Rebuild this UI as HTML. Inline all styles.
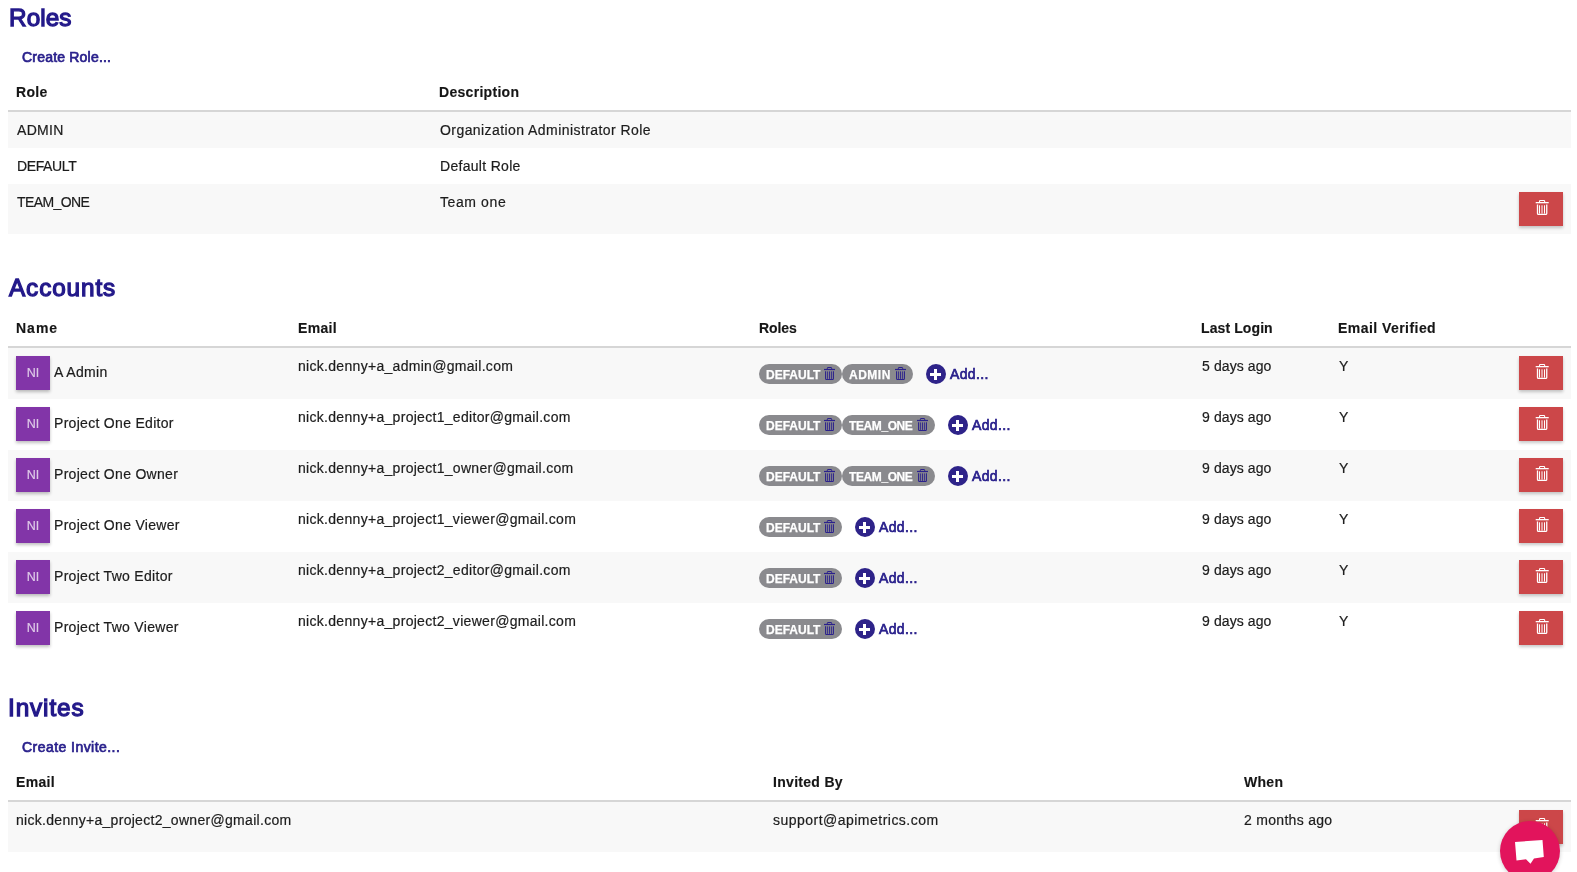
<!DOCTYPE html>
<html><head><meta charset="utf-8">
<style>
html,body{margin:0;padding:0;background:#fff;width:1577px;height:872px;overflow:hidden;position:relative;}
body{font-family:"Liberation Sans",sans-serif;color:#222;}
.h,.lk,.th,.td,.add,.chip,.av{will-change:transform;}
.h{position:absolute;font-size:24.3px;font-weight:normal;-webkit-text-stroke:1.3px #23198a;color:#23198a;line-height:30px;white-space:nowrap;}
.lk{position:absolute;font-size:14px;font-weight:normal;-webkit-text-stroke:0.7px #2a218c;color:#2a218c;line-height:20px;white-space:nowrap;letter-spacing:0.1px;}
.th{position:absolute;font-size:14px;font-weight:bold;color:#161616;-webkit-text-stroke:0.15px #161616;line-height:20px;white-space:nowrap;letter-spacing:0.3px;}
.td{position:absolute;font-size:14px;color:#1c1c1c;-webkit-text-stroke:0.2px #1c1c1c;line-height:20px;white-space:nowrap;letter-spacing:0.3px;}
.hl{position:absolute;left:8px;width:1563px;height:2px;background:#d6d6d6;}
.row{position:absolute;left:8px;width:1563px;}
.g{background:#f8f8f8;}
.del{position:absolute;left:1519px;width:44px;height:34px;background:#cc4749;box-shadow:0 2px 3px rgba(0,0,0,0.22);}
.del svg{position:absolute;left:16px;top:8px;}
.av{position:absolute;left:16px;width:34px;height:34px;background:#8235a8;box-shadow:0 2px 3px rgba(0,0,0,0.25);color:rgba(255,255,255,0.72);-webkit-text-stroke:0.2px rgba(255,255,255,0.5);font-size:12.5px;line-height:34px;text-align:center;}
.chip{position:absolute;height:20px;border-radius:10px;background:#8a8a8e;color:#fff;-webkit-text-stroke:0.25px #fff;font-size:12px;font-weight:bold;line-height:20px;}
.chip span{position:absolute;left:7px;top:1px;}
.chip svg{position:absolute;top:3px;}
.plus{position:absolute;width:20px;height:20px;border-radius:10px;background:#2e2389;}
.plus:before{content:"";position:absolute;left:4px;top:9px;width:11px;height:3px;background:#fff;}
.plus:after{content:"";position:absolute;left:8px;top:5px;width:3px;height:11px;background:#fff;}
.add{position:absolute;font-size:14px;font-weight:normal;-webkit-text-stroke:0.7px #2a218c;color:#2a218c;line-height:20px;white-space:nowrap;letter-spacing:0.35px;}
.chat{position:absolute;left:1500px;top:821px;width:60px;height:60px;border-radius:30px;background:#e2145c;box-shadow:0 1px 4px rgba(0,0,0,0.2);}
</style></head><body>
<div class="h" style="left:9px;top:3px;letter-spacing:0.1px">Roles</div>
<div class="lk" style="left:22px;top:47px;letter-spacing:0.2px">Create Role...</div>
<div class="th" style="left:16px;top:82px;letter-spacing:0.3px">Role</div>
<div class="th" style="left:439px;top:82px;letter-spacing:0.3px">Description</div>
<div class="hl" style="top:110px"></div>
<div class="row g" style="top:112px;height:36px"></div>
<div class="row" style="top:148px;height:36px"></div>
<div class="row g" style="top:184px;height:50px"></div>
<div class="td" style="left:17px;top:120px;letter-spacing:0.3px">ADMIN</div>
<div class="td" style="left:440px;top:120px;letter-spacing:0.43px">Organization Administrator Role</div>
<div class="td" style="left:17px;top:156px;letter-spacing:-0.37px">DEFAULT</div>
<div class="td" style="left:440px;top:156px">Default Role</div>
<div class="td" style="left:17px;top:192px;letter-spacing:-0.6px">TEAM_ONE</div>
<div class="td" style="left:440px;top:192px;letter-spacing:0.6px">Team one</div>
<div class="del" style="top:192px"><svg width="15" height="16" viewBox="0 0 15 16">
<rect x="0.7" y="2.0" width="13" height="1.3" fill="#fff"/>
<path d="M4.55 2.1V1.3Q4.55 0.55 5.3 0.55H8.9Q9.65 0.55 9.65 1.3V2.1" fill="none" stroke="#fff" stroke-width="1.1"/>
<path d="M2.5 4.6V13.4Q2.5 14.35 3.45 14.35H10.8Q11.75 14.35 11.75 13.4V4.6" fill="none" stroke="#fff" stroke-width="1.3"/>
<path d="M4.5 5.3V13.6M7.0 5.3V13.6M9.5 5.3V13.6" stroke="#fff" stroke-width="1"/>
</svg></div>
<div class="h" style="left:9px;top:273px;letter-spacing:0.9px">Accounts</div>
<div class="th" style="left:16px;top:318px;letter-spacing:1.0px">Name</div>
<div class="th" style="left:298px;top:318px;letter-spacing:0.3px">Email</div>
<div class="th" style="left:759px;top:318px;letter-spacing:-0.1px">Roles</div>
<div class="th" style="left:1201px;top:318px;letter-spacing:0.1px">Last Login</div>
<div class="th" style="left:1338px;top:318px;letter-spacing:0.45px">Email Verified</div>
<div class="hl" style="top:346px"></div>
<div class="row g" style="top:348px;height:51px"></div>
<div class="av" style="top:356px">NI</div>
<div class="td" style="left:54px;top:362px">A Admin</div>
<div class="td" style="left:298px;top:356px">nick.denny+a_admin@gmail.com</div>
<div class="td" style="left:1202px;top:356px;letter-spacing:0.1px">5 days ago</div>
<div class="td" style="left:1339px;top:356px">Y</div>
<div class="chip" style="left:759px;top:364px;width:83px"><span>DEFAULT</span><svg style="left:65px" width="11" height="13" viewBox="0 0 11 13">
<rect x="0" y="1.9" width="11" height="1.2" fill="#2b218c"/>
<path d="M3.3 2V1.1Q3.3 0.5 3.9 0.5H7.1Q7.7 0.5 7.7 1.1V2" fill="none" stroke="#2b218c" stroke-width="1"/>
<path d="M1.6 4.2V11.6Q1.6 12.5 2.5 12.5H8.5Q9.4 12.5 9.4 11.6V4.2" fill="none" stroke="#2b218c" stroke-width="1.1"/>
<path d="M3.6 4.4V11.9M5.5 4.4V11.9M7.4 4.4V11.9" stroke="#2b218c" stroke-width="0.9"/>
</svg></div>
<div class="chip" style="left:842px;top:364px;width:71px"><span style="letter-spacing:0.5px">ADMIN</span><svg style="left:53px" width="11" height="13" viewBox="0 0 11 13">
<rect x="0" y="1.9" width="11" height="1.2" fill="#2b218c"/>
<path d="M3.3 2V1.1Q3.3 0.5 3.9 0.5H7.1Q7.7 0.5 7.7 1.1V2" fill="none" stroke="#2b218c" stroke-width="1"/>
<path d="M1.6 4.2V11.6Q1.6 12.5 2.5 12.5H8.5Q9.4 12.5 9.4 11.6V4.2" fill="none" stroke="#2b218c" stroke-width="1.1"/>
<path d="M3.6 4.4V11.9M5.5 4.4V11.9M7.4 4.4V11.9" stroke="#2b218c" stroke-width="0.9"/>
</svg></div>
<div class="plus" style="left:926px;top:364px"></div>
<div class="add" style="left:950px;top:364px">Add...</div>
<div class="del" style="top:356px"><svg width="15" height="16" viewBox="0 0 15 16">
<rect x="0.7" y="2.0" width="13" height="1.3" fill="#fff"/>
<path d="M4.55 2.1V1.3Q4.55 0.55 5.3 0.55H8.9Q9.65 0.55 9.65 1.3V2.1" fill="none" stroke="#fff" stroke-width="1.1"/>
<path d="M2.5 4.6V13.4Q2.5 14.35 3.45 14.35H10.8Q11.75 14.35 11.75 13.4V4.6" fill="none" stroke="#fff" stroke-width="1.3"/>
<path d="M4.5 5.3V13.6M7.0 5.3V13.6M9.5 5.3V13.6" stroke="#fff" stroke-width="1"/>
</svg></div>
<div class="row" style="top:399px;height:51px"></div>
<div class="av" style="top:407px">NI</div>
<div class="td" style="left:54px;top:413px">Project One Editor</div>
<div class="td" style="left:298px;top:407px">nick.denny+a_project1_editor@gmail.com</div>
<div class="td" style="left:1202px;top:407px;letter-spacing:0.1px">9 days ago</div>
<div class="td" style="left:1339px;top:407px">Y</div>
<div class="chip" style="left:759px;top:415px;width:83px"><span>DEFAULT</span><svg style="left:65px" width="11" height="13" viewBox="0 0 11 13">
<rect x="0" y="1.9" width="11" height="1.2" fill="#2b218c"/>
<path d="M3.3 2V1.1Q3.3 0.5 3.9 0.5H7.1Q7.7 0.5 7.7 1.1V2" fill="none" stroke="#2b218c" stroke-width="1"/>
<path d="M1.6 4.2V11.6Q1.6 12.5 2.5 12.5H8.5Q9.4 12.5 9.4 11.6V4.2" fill="none" stroke="#2b218c" stroke-width="1.1"/>
<path d="M3.6 4.4V11.9M5.5 4.4V11.9M7.4 4.4V11.9" stroke="#2b218c" stroke-width="0.9"/>
</svg></div>
<div class="chip" style="left:842px;top:415px;width:93px"><span style="letter-spacing:-0.4px">TEAM_ONE</span><svg style="left:75px" width="11" height="13" viewBox="0 0 11 13">
<rect x="0" y="1.9" width="11" height="1.2" fill="#2b218c"/>
<path d="M3.3 2V1.1Q3.3 0.5 3.9 0.5H7.1Q7.7 0.5 7.7 1.1V2" fill="none" stroke="#2b218c" stroke-width="1"/>
<path d="M1.6 4.2V11.6Q1.6 12.5 2.5 12.5H8.5Q9.4 12.5 9.4 11.6V4.2" fill="none" stroke="#2b218c" stroke-width="1.1"/>
<path d="M3.6 4.4V11.9M5.5 4.4V11.9M7.4 4.4V11.9" stroke="#2b218c" stroke-width="0.9"/>
</svg></div>
<div class="plus" style="left:948px;top:415px"></div>
<div class="add" style="left:972px;top:415px">Add...</div>
<div class="del" style="top:407px"><svg width="15" height="16" viewBox="0 0 15 16">
<rect x="0.7" y="2.0" width="13" height="1.3" fill="#fff"/>
<path d="M4.55 2.1V1.3Q4.55 0.55 5.3 0.55H8.9Q9.65 0.55 9.65 1.3V2.1" fill="none" stroke="#fff" stroke-width="1.1"/>
<path d="M2.5 4.6V13.4Q2.5 14.35 3.45 14.35H10.8Q11.75 14.35 11.75 13.4V4.6" fill="none" stroke="#fff" stroke-width="1.3"/>
<path d="M4.5 5.3V13.6M7.0 5.3V13.6M9.5 5.3V13.6" stroke="#fff" stroke-width="1"/>
</svg></div>
<div class="row g" style="top:450px;height:51px"></div>
<div class="av" style="top:458px">NI</div>
<div class="td" style="left:54px;top:464px">Project One Owner</div>
<div class="td" style="left:298px;top:458px">nick.denny+a_project1_owner@gmail.com</div>
<div class="td" style="left:1202px;top:458px;letter-spacing:0.1px">9 days ago</div>
<div class="td" style="left:1339px;top:458px">Y</div>
<div class="chip" style="left:759px;top:466px;width:83px"><span>DEFAULT</span><svg style="left:65px" width="11" height="13" viewBox="0 0 11 13">
<rect x="0" y="1.9" width="11" height="1.2" fill="#2b218c"/>
<path d="M3.3 2V1.1Q3.3 0.5 3.9 0.5H7.1Q7.7 0.5 7.7 1.1V2" fill="none" stroke="#2b218c" stroke-width="1"/>
<path d="M1.6 4.2V11.6Q1.6 12.5 2.5 12.5H8.5Q9.4 12.5 9.4 11.6V4.2" fill="none" stroke="#2b218c" stroke-width="1.1"/>
<path d="M3.6 4.4V11.9M5.5 4.4V11.9M7.4 4.4V11.9" stroke="#2b218c" stroke-width="0.9"/>
</svg></div>
<div class="chip" style="left:842px;top:466px;width:93px"><span style="letter-spacing:-0.4px">TEAM_ONE</span><svg style="left:75px" width="11" height="13" viewBox="0 0 11 13">
<rect x="0" y="1.9" width="11" height="1.2" fill="#2b218c"/>
<path d="M3.3 2V1.1Q3.3 0.5 3.9 0.5H7.1Q7.7 0.5 7.7 1.1V2" fill="none" stroke="#2b218c" stroke-width="1"/>
<path d="M1.6 4.2V11.6Q1.6 12.5 2.5 12.5H8.5Q9.4 12.5 9.4 11.6V4.2" fill="none" stroke="#2b218c" stroke-width="1.1"/>
<path d="M3.6 4.4V11.9M5.5 4.4V11.9M7.4 4.4V11.9" stroke="#2b218c" stroke-width="0.9"/>
</svg></div>
<div class="plus" style="left:948px;top:466px"></div>
<div class="add" style="left:972px;top:466px">Add...</div>
<div class="del" style="top:458px"><svg width="15" height="16" viewBox="0 0 15 16">
<rect x="0.7" y="2.0" width="13" height="1.3" fill="#fff"/>
<path d="M4.55 2.1V1.3Q4.55 0.55 5.3 0.55H8.9Q9.65 0.55 9.65 1.3V2.1" fill="none" stroke="#fff" stroke-width="1.1"/>
<path d="M2.5 4.6V13.4Q2.5 14.35 3.45 14.35H10.8Q11.75 14.35 11.75 13.4V4.6" fill="none" stroke="#fff" stroke-width="1.3"/>
<path d="M4.5 5.3V13.6M7.0 5.3V13.6M9.5 5.3V13.6" stroke="#fff" stroke-width="1"/>
</svg></div>
<div class="row" style="top:501px;height:51px"></div>
<div class="av" style="top:509px">NI</div>
<div class="td" style="left:54px;top:515px">Project One Viewer</div>
<div class="td" style="left:298px;top:509px">nick.denny+a_project1_viewer@gmail.com</div>
<div class="td" style="left:1202px;top:509px;letter-spacing:0.1px">9 days ago</div>
<div class="td" style="left:1339px;top:509px">Y</div>
<div class="chip" style="left:759px;top:517px;width:83px"><span>DEFAULT</span><svg style="left:65px" width="11" height="13" viewBox="0 0 11 13">
<rect x="0" y="1.9" width="11" height="1.2" fill="#2b218c"/>
<path d="M3.3 2V1.1Q3.3 0.5 3.9 0.5H7.1Q7.7 0.5 7.7 1.1V2" fill="none" stroke="#2b218c" stroke-width="1"/>
<path d="M1.6 4.2V11.6Q1.6 12.5 2.5 12.5H8.5Q9.4 12.5 9.4 11.6V4.2" fill="none" stroke="#2b218c" stroke-width="1.1"/>
<path d="M3.6 4.4V11.9M5.5 4.4V11.9M7.4 4.4V11.9" stroke="#2b218c" stroke-width="0.9"/>
</svg></div>
<div class="plus" style="left:855px;top:517px"></div>
<div class="add" style="left:879px;top:517px">Add...</div>
<div class="del" style="top:509px"><svg width="15" height="16" viewBox="0 0 15 16">
<rect x="0.7" y="2.0" width="13" height="1.3" fill="#fff"/>
<path d="M4.55 2.1V1.3Q4.55 0.55 5.3 0.55H8.9Q9.65 0.55 9.65 1.3V2.1" fill="none" stroke="#fff" stroke-width="1.1"/>
<path d="M2.5 4.6V13.4Q2.5 14.35 3.45 14.35H10.8Q11.75 14.35 11.75 13.4V4.6" fill="none" stroke="#fff" stroke-width="1.3"/>
<path d="M4.5 5.3V13.6M7.0 5.3V13.6M9.5 5.3V13.6" stroke="#fff" stroke-width="1"/>
</svg></div>
<div class="row g" style="top:552px;height:51px"></div>
<div class="av" style="top:560px">NI</div>
<div class="td" style="left:54px;top:566px">Project Two Editor</div>
<div class="td" style="left:298px;top:560px">nick.denny+a_project2_editor@gmail.com</div>
<div class="td" style="left:1202px;top:560px;letter-spacing:0.1px">9 days ago</div>
<div class="td" style="left:1339px;top:560px">Y</div>
<div class="chip" style="left:759px;top:568px;width:83px"><span>DEFAULT</span><svg style="left:65px" width="11" height="13" viewBox="0 0 11 13">
<rect x="0" y="1.9" width="11" height="1.2" fill="#2b218c"/>
<path d="M3.3 2V1.1Q3.3 0.5 3.9 0.5H7.1Q7.7 0.5 7.7 1.1V2" fill="none" stroke="#2b218c" stroke-width="1"/>
<path d="M1.6 4.2V11.6Q1.6 12.5 2.5 12.5H8.5Q9.4 12.5 9.4 11.6V4.2" fill="none" stroke="#2b218c" stroke-width="1.1"/>
<path d="M3.6 4.4V11.9M5.5 4.4V11.9M7.4 4.4V11.9" stroke="#2b218c" stroke-width="0.9"/>
</svg></div>
<div class="plus" style="left:855px;top:568px"></div>
<div class="add" style="left:879px;top:568px">Add...</div>
<div class="del" style="top:560px"><svg width="15" height="16" viewBox="0 0 15 16">
<rect x="0.7" y="2.0" width="13" height="1.3" fill="#fff"/>
<path d="M4.55 2.1V1.3Q4.55 0.55 5.3 0.55H8.9Q9.65 0.55 9.65 1.3V2.1" fill="none" stroke="#fff" stroke-width="1.1"/>
<path d="M2.5 4.6V13.4Q2.5 14.35 3.45 14.35H10.8Q11.75 14.35 11.75 13.4V4.6" fill="none" stroke="#fff" stroke-width="1.3"/>
<path d="M4.5 5.3V13.6M7.0 5.3V13.6M9.5 5.3V13.6" stroke="#fff" stroke-width="1"/>
</svg></div>
<div class="row" style="top:603px;height:51px"></div>
<div class="av" style="top:611px">NI</div>
<div class="td" style="left:54px;top:617px">Project Two Viewer</div>
<div class="td" style="left:298px;top:611px">nick.denny+a_project2_viewer@gmail.com</div>
<div class="td" style="left:1202px;top:611px;letter-spacing:0.1px">9 days ago</div>
<div class="td" style="left:1339px;top:611px">Y</div>
<div class="chip" style="left:759px;top:619px;width:83px"><span>DEFAULT</span><svg style="left:65px" width="11" height="13" viewBox="0 0 11 13">
<rect x="0" y="1.9" width="11" height="1.2" fill="#2b218c"/>
<path d="M3.3 2V1.1Q3.3 0.5 3.9 0.5H7.1Q7.7 0.5 7.7 1.1V2" fill="none" stroke="#2b218c" stroke-width="1"/>
<path d="M1.6 4.2V11.6Q1.6 12.5 2.5 12.5H8.5Q9.4 12.5 9.4 11.6V4.2" fill="none" stroke="#2b218c" stroke-width="1.1"/>
<path d="M3.6 4.4V11.9M5.5 4.4V11.9M7.4 4.4V11.9" stroke="#2b218c" stroke-width="0.9"/>
</svg></div>
<div class="plus" style="left:855px;top:619px"></div>
<div class="add" style="left:879px;top:619px">Add...</div>
<div class="del" style="top:611px"><svg width="15" height="16" viewBox="0 0 15 16">
<rect x="0.7" y="2.0" width="13" height="1.3" fill="#fff"/>
<path d="M4.55 2.1V1.3Q4.55 0.55 5.3 0.55H8.9Q9.65 0.55 9.65 1.3V2.1" fill="none" stroke="#fff" stroke-width="1.1"/>
<path d="M2.5 4.6V13.4Q2.5 14.35 3.45 14.35H10.8Q11.75 14.35 11.75 13.4V4.6" fill="none" stroke="#fff" stroke-width="1.3"/>
<path d="M4.5 5.3V13.6M7.0 5.3V13.6M9.5 5.3V13.6" stroke="#fff" stroke-width="1"/>
</svg></div>
<div class="h" style="left:8px;top:693px;letter-spacing:0.9px">Invites</div>
<div class="lk" style="left:22px;top:737px;letter-spacing:0.45px">Create Invite...</div>
<div class="th" style="left:16px;top:772px;letter-spacing:0.3px">Email</div>
<div class="th" style="left:773px;top:772px">Invited By</div>
<div class="th" style="left:1244px;top:772px">When</div>
<div class="hl" style="top:800px"></div>
<div class="row g" style="top:802px;height:50px"></div>
<div class="td" style="left:16px;top:810px">nick.denny+a_project2_owner@gmail.com</div>
<div class="td" style="left:773px;top:810px;letter-spacing:0.48px">support@apimetrics.com</div>
<div class="td" style="left:1244px;top:810px">2 months ago</div>
<div class="del" style="top:810px"><svg width="15" height="16" viewBox="0 0 15 16">
<rect x="0.7" y="2.0" width="13" height="1.3" fill="#fff"/>
<path d="M4.55 2.1V1.3Q4.55 0.55 5.3 0.55H8.9Q9.65 0.55 9.65 1.3V2.1" fill="none" stroke="#fff" stroke-width="1.1"/>
<path d="M2.5 4.6V13.4Q2.5 14.35 3.45 14.35H10.8Q11.75 14.35 11.75 13.4V4.6" fill="none" stroke="#fff" stroke-width="1.3"/>
<path d="M4.5 5.3V13.6M7.0 5.3V13.6M9.5 5.3V13.6" stroke="#fff" stroke-width="1"/>
</svg></div>
<div class="chat"><svg style="position:absolute;left:0;top:0" width="60" height="60" viewBox="0 0 60 60"><path d="M15 21L42.5 19L43.8 36L34 37.4L30.5 42.7L26 38.3L16.5 39.6Z" fill="#fff"/></svg></div>
</body></html>
